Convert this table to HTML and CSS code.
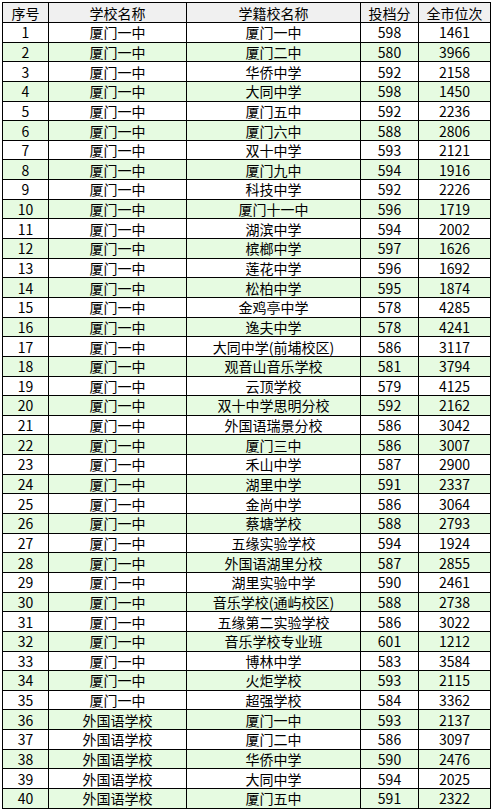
FILE: index.html
```html
<!DOCTYPE html>
<html lang="zh-CN">
<head>
<meta charset="utf-8">
<title>投档分</title>
<link rel="stylesheet" href="styles.css">
</head>
<body>
<table class="sheet">
<colgroup>
<col class="c-no"><col class="c-school"><col class="c-origin"><col class="c-score"><col class="c-rank">
</colgroup>
<thead>
<tr class="head"><th>序号</th><th>学校名称</th><th>学籍校名称</th><th>投档分</th><th>全市位次</th></tr>
</thead>
<tbody>
<tr><td>1</td><td>厦门一中</td><td>厦门一中</td><td>598</td><td>1461</td></tr>
<tr class="alt"><td>2</td><td>厦门一中</td><td>厦门二中</td><td>580</td><td>3966</td></tr>
<tr><td>3</td><td>厦门一中</td><td>华侨中学</td><td>592</td><td>2158</td></tr>
<tr class="alt"><td>4</td><td>厦门一中</td><td>大同中学</td><td>598</td><td>1450</td></tr>
<tr><td>5</td><td>厦门一中</td><td>厦门五中</td><td>592</td><td>2236</td></tr>
<tr class="alt"><td>6</td><td>厦门一中</td><td>厦门六中</td><td>588</td><td>2806</td></tr>
<tr><td>7</td><td>厦门一中</td><td>双十中学</td><td>593</td><td>2121</td></tr>
<tr class="alt"><td>8</td><td>厦门一中</td><td>厦门九中</td><td>594</td><td>1916</td></tr>
<tr><td>9</td><td>厦门一中</td><td>科技中学</td><td>592</td><td>2226</td></tr>
<tr class="alt"><td>10</td><td>厦门一中</td><td>厦门十一中</td><td>596</td><td>1719</td></tr>
<tr><td>11</td><td>厦门一中</td><td>湖滨中学</td><td>594</td><td>2002</td></tr>
<tr class="alt"><td>12</td><td>厦门一中</td><td>槟榔中学</td><td>597</td><td>1626</td></tr>
<tr><td>13</td><td>厦门一中</td><td>莲花中学</td><td>596</td><td>1692</td></tr>
<tr class="alt"><td>14</td><td>厦门一中</td><td>松柏中学</td><td>595</td><td>1874</td></tr>
<tr><td>15</td><td>厦门一中</td><td>金鸡亭中学</td><td>578</td><td>4285</td></tr>
<tr class="alt"><td>16</td><td>厦门一中</td><td>逸夫中学</td><td>578</td><td>4241</td></tr>
<tr><td>17</td><td>厦门一中</td><td>大同中学(前埔校区)</td><td>586</td><td>3117</td></tr>
<tr class="alt"><td>18</td><td>厦门一中</td><td>观音山音乐学校</td><td>581</td><td>3794</td></tr>
<tr><td>19</td><td>厦门一中</td><td>云顶学校</td><td>579</td><td>4125</td></tr>
<tr class="alt"><td>20</td><td>厦门一中</td><td>双十中学思明分校</td><td>592</td><td>2162</td></tr>
<tr><td>21</td><td>厦门一中</td><td>外国语瑞景分校</td><td>586</td><td>3042</td></tr>
<tr class="alt"><td>22</td><td>厦门一中</td><td>厦门三中</td><td>586</td><td>3007</td></tr>
<tr><td>23</td><td>厦门一中</td><td>禾山中学</td><td>587</td><td>2900</td></tr>
<tr class="alt"><td>24</td><td>厦门一中</td><td>湖里中学</td><td>591</td><td>2337</td></tr>
<tr><td>25</td><td>厦门一中</td><td>金尚中学</td><td>586</td><td>3064</td></tr>
<tr class="alt"><td>26</td><td>厦门一中</td><td>蔡塘学校</td><td>588</td><td>2793</td></tr>
<tr><td>27</td><td>厦门一中</td><td>五缘实验学校</td><td>594</td><td>1924</td></tr>
<tr class="alt"><td>28</td><td>厦门一中</td><td>外国语湖里分校</td><td>587</td><td>2855</td></tr>
<tr><td>29</td><td>厦门一中</td><td>湖里实验中学</td><td>590</td><td>2461</td></tr>
<tr class="alt"><td>30</td><td>厦门一中</td><td>音乐学校(通屿校区)</td><td>588</td><td>2738</td></tr>
<tr><td>31</td><td>厦门一中</td><td>五缘第二实验学校</td><td>586</td><td>3022</td></tr>
<tr class="alt"><td>32</td><td>厦门一中</td><td>音乐学校专业班</td><td>601</td><td>1212</td></tr>
<tr><td>33</td><td>厦门一中</td><td>博林中学</td><td>583</td><td>3584</td></tr>
<tr class="alt"><td>34</td><td>厦门一中</td><td>火炬学校</td><td>593</td><td>2115</td></tr>
<tr><td>35</td><td>厦门一中</td><td>超强学校</td><td>584</td><td>3362</td></tr>
<tr class="alt"><td>36</td><td>外国语学校</td><td>厦门一中</td><td>593</td><td>2137</td></tr>
<tr><td>37</td><td>外国语学校</td><td>厦门二中</td><td>586</td><td>3097</td></tr>
<tr class="alt"><td>38</td><td>外国语学校</td><td>华侨中学</td><td>590</td><td>2476</td></tr>
<tr><td>39</td><td>外国语学校</td><td>大同中学</td><td>594</td><td>2025</td></tr>
<tr class="alt"><td>40</td><td>外国语学校</td><td>厦门五中</td><td>591</td><td>2322</td></tr>
</tbody>
</table>
</body>
</html>
```
FILE: styles.css
```css
html, body {
  margin: 0;
  padding: 0;
  background: #ffffff;
}
body {
  padding: 2px 0 0 2px;
  font-family: "Noto Sans CJK SC", "Noto Sans", sans-serif;
  font-size: 14px;
  color: #000000;
}
.sheet {
  border-collapse: collapse;
  table-layout: fixed;
  width: 488px;
}
.c-no { width: 46px; }
.c-school { width: 138px; }
.c-origin { width: 174px; }
.c-score { width: 58px; }
.c-rank { width: 72px; }
.sheet th,
.sheet td {
  border: 1px solid #000000;
  padding: 0;
  text-align: center;
  vertical-align: middle;
  line-height: 16px;
  font-weight: normal;
  white-space: nowrap;
  overflow: hidden;
}
.head th {
  background: #f0f0f0;
  height: 19px;
}
.sheet tbody td {
  height: 18.65px;
}
.alt td {
  background: #e6fbe1;
}
```
